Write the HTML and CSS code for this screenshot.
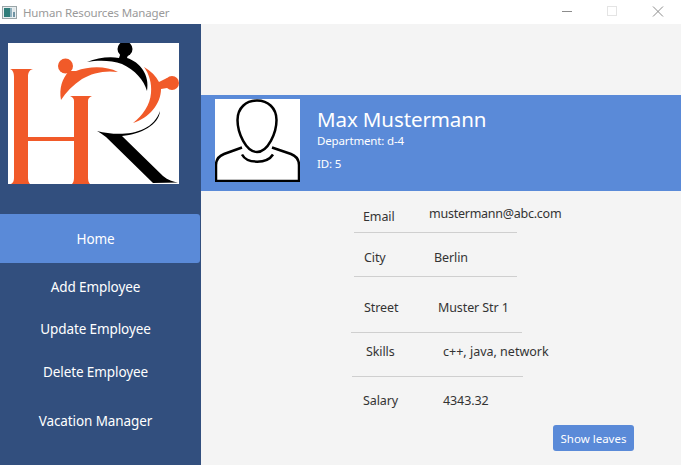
FILE: index.html
```html
<!DOCTYPE html>
<html lang="en">
<head>
<meta charset="utf-8">
<title>Human Resources Manager</title>
<link rel="stylesheet" href="styles.css">
</head>
<body>
<div class="window">
  <header class="titlebar">
    <svg class="app-icon" width="15" height="13" viewBox="0 0 15 13">
      <rect x="0.5" y="0.5" width="14" height="12" fill="#e8eef0" stroke="#9aa5a8"/>
      <rect x="2" y="2" width="6" height="9" fill="#2f7d7a"/>
      <rect x="8" y="2" width="2" height="9" fill="#8fb0bd"/>
      <rect x="11" y="2" width="2" height="4" fill="#dfe6e8"/>
      <rect x="11" y="6" width="2" height="5" fill="#6f93a3"/>
    </svg>
    <span class="app-title">Human Resources Manager</span>
    <div class="controls">
      <svg width="161" height="24" viewBox="520 0 161 24">
        <path d="M562 11.5H572" stroke="#8c8c8c" stroke-width="1"/>
        <rect x="607.5" y="6.5" width="9" height="9" fill="none" stroke="#e4e4e4"/>
        <path d="M653 6.5L663 16.5M663 6.5L653 16.5" stroke="#8c8c8c" stroke-width="1"/>
      </svg>
    </div>
  </header>
  <div class="app">
    <aside class="sidebar">
      <svg class="logo" width="171" height="141" viewBox="8 43 171 141">
        <rect x="8" y="43" width="171" height="141" fill="#fff"/>
        <g fill="#f15a29">
          <path d="M10 69H33C29 70 28 73 28 77V137H74V101C74 99 73 97 70 96H92C89 97 88 99 88 101V178C88 181 89 183 90 184H72C73 183 74 181 74 178V141H28V178C28 181 29 183 30 184H11C13 183 14 181 14 178V77C14 73 13 70 10 69Z"/>
          <circle cx="65.500" cy="66" r="7.500"/>
          <path d="M61 100C59 88 62 79 69 71L76 71C90 66 106 66 118 72C105 70 92 73 82 79C73 85 66 92 61 100Z"/>
          <circle cx="172" cy="83" r="7"/>
          <path d="M144 67C151 71 156 76 159 82L167 78V88L161 89C161 104 149 118 133 123C143 115 150 105 151 93C152 83 149 74 144 67Z"/>
        </g>
        <g fill="#000">
          <circle cx="125" cy="49" r="7.500"/>
          <path d="M87 62C97 58 109 56 119 58L121 52H129L127 58C140 62 150 75 147 91C144 80 135 70 122 64C111 60 98 60 87 62Z"/>
          <path d="M160 111C159 125 141 134 122 136L163 176C168 180 173 182 178 182.500L153 183L106 137C102 134 99 132 97 131C120 137 152 135 160 111Z"/>
        </g>
      </svg>
      <nav class="nav">
        <a class="nav-item nav-home">Home</a>
        <a class="nav-item nav-add">Add Employee</a>
        <a class="nav-item">Update Employee</a>
        <a class="nav-item nav-delete">Delete Employee</a>
        <a class="nav-item nav-vacation">Vacation Manager</a>
      </nav>
    </aside>
    <main class="content">
      <section class="profile">
        <svg class="avatar" width="85" height="83" viewBox="215 99 85 83">
          <rect x="215" y="99" width="85" height="83" fill="#fff"/>
          <g fill="none" stroke="#000" stroke-width="2.500">
            <path d="M257 100.500C268 100.500 276.500 108 276.500 120C276.500 133 268 152 257 152C246 152 237.500 133 237.500 120C237.500 108 246 100.500 257 100.500Z"/>
            <path d="M242 147.500L224 154C219 156 216 160 216 165V181H299V165C299 160 296 156 291 154L272 147.500"/>
            <path d="M242 154.500C247 164 267 164 273 154.500"/>
          </g>
          <path d="M215 180H300V182H215Z" fill="#000"/>
        </svg>
        <div class="identity">
          <h1 class="name">Max Mustermann</h1>
          <p class="dept">Department: d-4</p>
          <p class="emp-id">ID: 5</p>
        </div>
      </section>
      <section class="details">
        <div class="row row-email"><span class="label">Email</span><span class="value">mustermann@abc.com</span></div>
        <div class="row row-city"><span class="label">City</span><span class="value">Berlin</span></div>
        <div class="row row-street"><span class="label">Street</span><span class="value">Muster Str 1</span></div>
        <div class="row row-skills"><span class="label">Skills</span><span class="value">c++, java, network</span></div>
        <div class="row row-salary"><span class="label">Salary</span><span class="value">4343.32</span></div>
      </section>
      <div class="actions"><button class="leaves">Show leaves</button></div>
    </main>
  </div>
</div>
</body>
</html>
```

FILE: styles.css
```css
* { box-sizing: border-box; }
html, body { margin: 0; height: 100%; }
body { font-family: "Noto Sans", "Open Sans", sans-serif; background: #f4f4f4; overflow: hidden; }
.window { width: 681px; height: 465px; display: flex; flex-direction: column; }

.titlebar { height: 24px; background: #fff; display: flex; align-items: center; padding-left: 2px; flex: none; }
.app-icon { margin-right: 6px; flex: none; }
.app-title { font-size: 11.500px; letter-spacing: -0.150px; color: #9a9a9a; }
.controls { margin-left: auto; height: 24px; }
.controls svg { display: block; }

.app { flex: 1; display: flex; min-height: 0; }
.sidebar { width: 201px; background: #324f7e; flex: none; padding-top: 19px; }
.logo { display: block; margin-left: 8px; }
.nav { display: flex; flex-direction: column; margin-top: 30px; width: 200px; }
.nav-item { height: 42px; display: flex; align-items: center; justify-content: center; color: #fff; font-size: 13.500px; letter-spacing: -0.100px; padding: 0 9px 1px 0; }
.nav-home { height: 49px; background: #5a8ad8; border-radius: 0 3px 3px 0; padding-bottom: 0; }
.nav-add { margin-top: 3px; }
.nav-delete { margin-top: 1px; }
.nav-vacation { margin-top: 7px; }

.content { flex: 1; display: flex; flex-direction: column; min-width: 0; }
.profile { margin-top: 71px; height: 96px; background: #5a8ad8; display: flex; padding: 4px 0 0 14px; color: #fff; }
.avatar { display: block; flex: none; }
.identity { margin-left: 17px; }
.name { margin: 5px 0 0; font-size: 20.500px; font-weight: 400; line-height: 30px; letter-spacing: -0.100px; }
.dept { margin: -1px 0 0; font-size: 11.500px; line-height: 16px; letter-spacing: -0.150px; }
.emp-id { margin: 7px 0 0; font-size: 11.500px; line-height: 16px; letter-spacing: -0.150px; }

.details { display: flex; flex-direction: column; font-size: 12.500px; letter-spacing: -0.100px; color: #333; }
.row { display: flex; border-bottom: 1px solid #cfcfcf; }
.label { flex: none; }
.row-email { height: 42px; margin-left: 153px; width: 163px; padding: 17px 0 0 9px; }
.row-email .label { width: 66px; }
.row-email .value { margin-top: -3px; letter-spacing: -0.250px; }
.row-city { height: 44px; margin-left: 153px; width: 163px; padding: 16px 0 0 10px; }
.row-city .label { width: 70px; }
.row-street { height: 56px; margin-left: 150px; width: 171px; padding: 22px 0 0 13px; }
.row-street .label { width: 74px; }
.row-skills { height: 44px; margin-left: 151px; width: 171px; padding: 10px 0 0 14px; }
.row-skills .label { width: 77px; }
.row-skills .value { letter-spacing: 0; }
.row-salary { height: 44px; margin-left: 151px; width: 171px; padding: 15px 0 0 11px; border-bottom: 0; }
.row-salary .label { width: 80px; }
.value { white-space: nowrap; }

.actions { display: flex; padding: 4px 0 0 352px; }
.leaves { width: 81px; height: 26px; border: 0; border-radius: 3px; background: #5a8ad8; color: #fff; font: 11.500px "Noto Sans", "Open Sans", sans-serif; padding: 0; }
```
